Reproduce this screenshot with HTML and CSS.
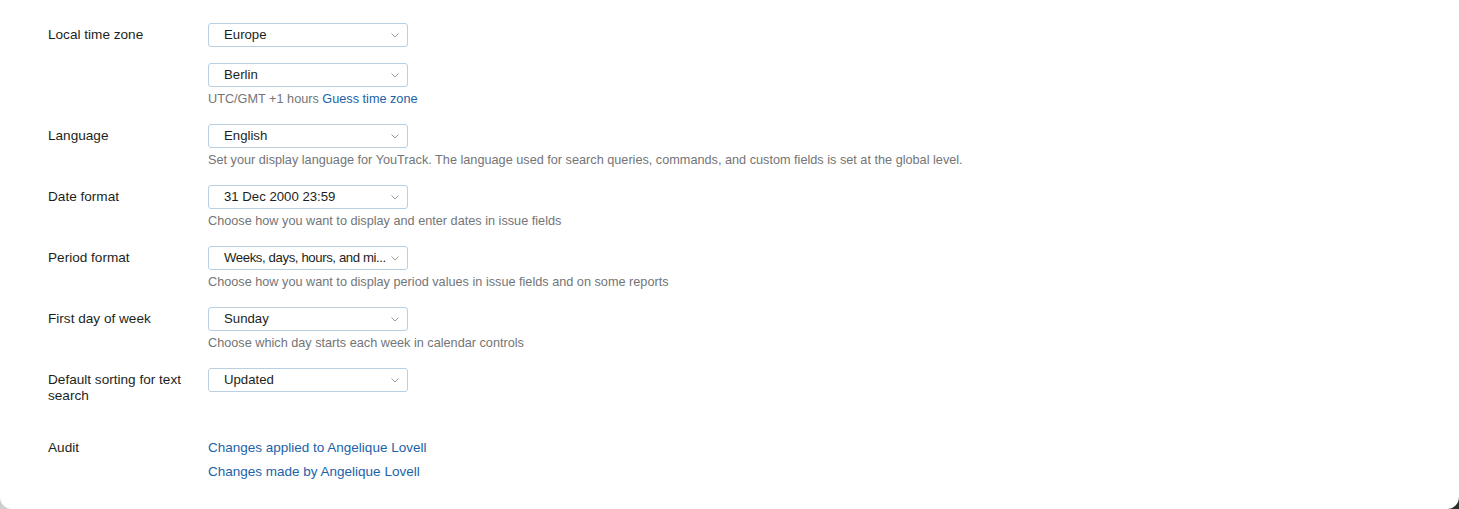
FILE: index.html
```html
<!DOCTYPE html>
<html lang="en">
<head>
<meta charset="utf-8">
<title>Profile settings</title>
<link rel="stylesheet" href="styles.css">
</head>
<body>
<div class="panel">
  <div class="form">
    <div class="row">
      <div class="label">Local time zone</div>
      <div class="control">
        <div class="select"><span class="value">Europe</span><svg class="chev" width="8" height="5" viewBox="0 0 8 5"><polyline points="0.5,0.5 4,4 7.5,0.5" fill="none" stroke="#9a9a9a" stroke-width="1"/></svg></div>
        <div class="select second"><span class="value">Berlin</span><svg class="chev" width="8" height="5" viewBox="0 0 8 5"><polyline points="0.5,0.5 4,4 7.5,0.5" fill="none" stroke="#9a9a9a" stroke-width="1"/></svg></div>
        <div class="hint">UTC/GMT +1 hours <a class="link" href="#">Guess time zone</a></div>
      </div>
    </div>
    <div class="row">
      <div class="label">Language</div>
      <div class="control">
        <div class="select"><span class="value">English</span><svg class="chev" width="8" height="5" viewBox="0 0 8 5"><polyline points="0.5,0.5 4,4 7.5,0.5" fill="none" stroke="#9a9a9a" stroke-width="1"/></svg></div>
        <div class="hint">Set your display language for YouTrack. The language used for search queries, commands, and custom fields is set at the global level.</div>
      </div>
    </div>
    <div class="row">
      <div class="label">Date format</div>
      <div class="control">
        <div class="select"><span class="value">31 Dec 2000 23:59</span><svg class="chev" width="8" height="5" viewBox="0 0 8 5"><polyline points="0.5,0.5 4,4 7.5,0.5" fill="none" stroke="#9a9a9a" stroke-width="1"/></svg></div>
        <div class="hint">Choose how you want to display and enter dates in issue fields</div>
      </div>
    </div>
    <div class="row">
      <div class="label">Period format</div>
      <div class="control">
        <div class="select"><span class="value tight">Weeks, days, hours, and mi...</span><svg class="chev" width="8" height="5" viewBox="0 0 8 5"><polyline points="0.5,0.5 4,4 7.5,0.5" fill="none" stroke="#9a9a9a" stroke-width="1"/></svg></div>
        <div class="hint">Choose how you want to display period values in issue fields and on some reports</div>
      </div>
    </div>
    <div class="row">
      <div class="label">First day of week</div>
      <div class="control">
        <div class="select"><span class="value">Sunday</span><svg class="chev" width="8" height="5" viewBox="0 0 8 5"><polyline points="0.5,0.5 4,4 7.5,0.5" fill="none" stroke="#9a9a9a" stroke-width="1"/></svg></div>
        <div class="hint">Choose which day starts each week in calendar controls</div>
      </div>
    </div>
    <div class="row">
      <div class="label">Default sorting for text search</div>
      <div class="control">
        <div class="select"><span class="value">Updated</span><svg class="chev" width="8" height="5" viewBox="0 0 8 5"><polyline points="0.5,0.5 4,4 7.5,0.5" fill="none" stroke="#9a9a9a" stroke-width="1"/></svg></div>
      </div>
    </div>
    <div class="row audit">
      <div class="label plain">Audit</div>
      <div class="control links">
        <a class="link big" href="#">Changes applied to Angelique Lovell</a>
        <a class="link big" href="#">Changes made by Angelique Lovell</a>
      </div>
    </div>
  </div>
</div>
</body>
</html>
```
FILE: styles.css
```css
html, body {
  margin: 0;
  padding: 0;
  height: 100%;
}
body {
  background: linear-gradient(to right, #cfcfcf 0%, #8a8a8a 50%, #2e2e2e 100%);
  font-family: "Liberation Sans", Arial, Helvetica, sans-serif;
  color: #1c1f22;
  overflow: hidden;
}
.panel {
  background: #ffffff;
  height: 509px;
  box-sizing: border-box;
  border-radius: 0 0 12px 12px;
  padding: 23px 0 0 48px;
}
.form {
  display: flex;
  flex-direction: column;
}
.row {
  display: grid;
  grid-template-columns: 160px 1fr;
  margin-bottom: 17px;
}
.label {
  font-size: 13.6px;
  line-height: 16px;
  padding-top: 4px;
  width: 140px;
}
.label.plain {
  padding-top: 0;
}
.control {
  display: flex;
  flex-direction: column;
  align-items: flex-start;
}
.select {
  width: 200px;
  height: 24px;
  box-sizing: border-box;
  border: 1px solid #b9cfe2;
  border-radius: 3px;
  display: flex;
  align-items: center;
  padding: 0 8px 0 15px;
  font-size: 13.2px;
  color: #1c1f22;
  background: #fff;
}
.select.second {
  margin-top: 16px;
}
.value {
  flex: 1;
  min-width: 0;
  white-space: nowrap;
  line-height: 22px;
}
.value.tight {
  letter-spacing: -0.4px;
}
.chev {
  flex: none;
  margin-top: 1px;
}
.hint {
  margin-top: 4px;
  font-size: 12.7px;
  line-height: 16px;
  color: #737577;
  white-space: nowrap;
}
.link {
  color: #1c62a8;
  text-decoration: none;
}
.audit {
  margin-top: 19px;
}
.links {
  gap: 8px;
}
.link.big {
  font-size: 13.5px;
  line-height: 16px;
}
```
